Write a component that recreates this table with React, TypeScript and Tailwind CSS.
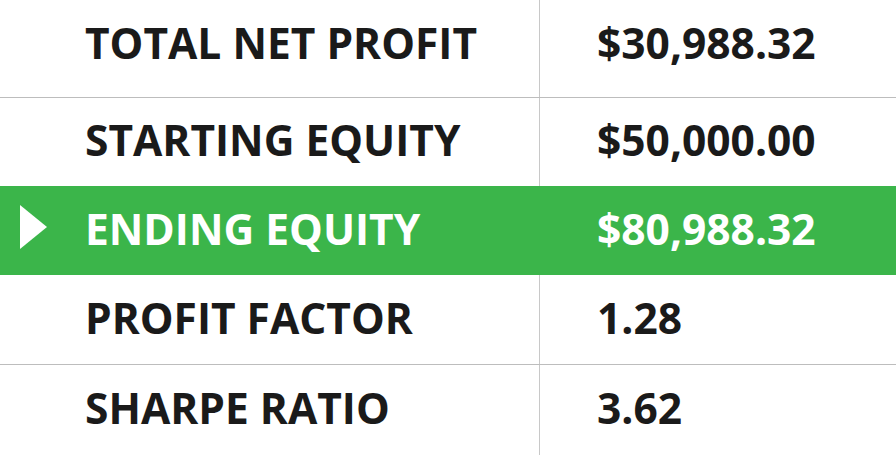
const rows = [
  { label: "TOTAL NET PROFIT", value: "$30,988.32" },
  { label: "STARTING EQUITY", value: "$50,000.00" },
  { label: "ENDING EQUITY", value: "$80,988.32", active: true },
  { label: "PROFIT FACTOR", value: "1.28" },
  { label: "SHARPE RATIO", value: "3.62" },
];

const heights = ["h-[97px]", "h-[89px]", "h-[89px]", "h-[89px]", "h-[91px]"];

export default function App() {
  return (
    <div
      className="w-[896px] h-[455px] bg-white overflow-hidden"
      style={{ fontFamily: '"Open Sans", sans-serif' }}
    >
      {rows.map((r, i) => (
        <div
          key={r.label}
          className={`flex ${heights[i]} ${
            i > 0 && !r.active && !rows[i - 1].active ? "border-t border-[#bdbdbd]" : ""
          } ${r.active ? "bg-[#3bb54a] text-white" : "text-[#1a1a1a]"}`}
        >
          <div
            className={`relative w-[540px] flex items-center pl-[85px] border-r ${
              r.active ? "border-[#3bb54a]" : "border-[#c8c8c8]"
            } ${i === 0 ? "pb-[10px]" : "pb-[3px]"}`}
          >
            {r.active && (
              <svg
                className="absolute left-[20px] top-[19px]"
                width="28"
                height="45"
                viewBox="0 0 28 45"
              >
                <polygon points="0,0 27,22 0,44" fill="#fff" />
              </svg>
            )}
            <span className="text-[42.5px] font-bold leading-none">
              {r.label}
            </span>
          </div>
          <div
            className={`flex-1 flex items-center pl-[57px] ${
              i === 0 ? "pb-[10px]" : "pb-[3px]"
            }`}
          >
            <span className="text-[42.5px] font-bold leading-none">{r.value}</span>
          </div>
        </div>
      ))}
    </div>
  );
}
